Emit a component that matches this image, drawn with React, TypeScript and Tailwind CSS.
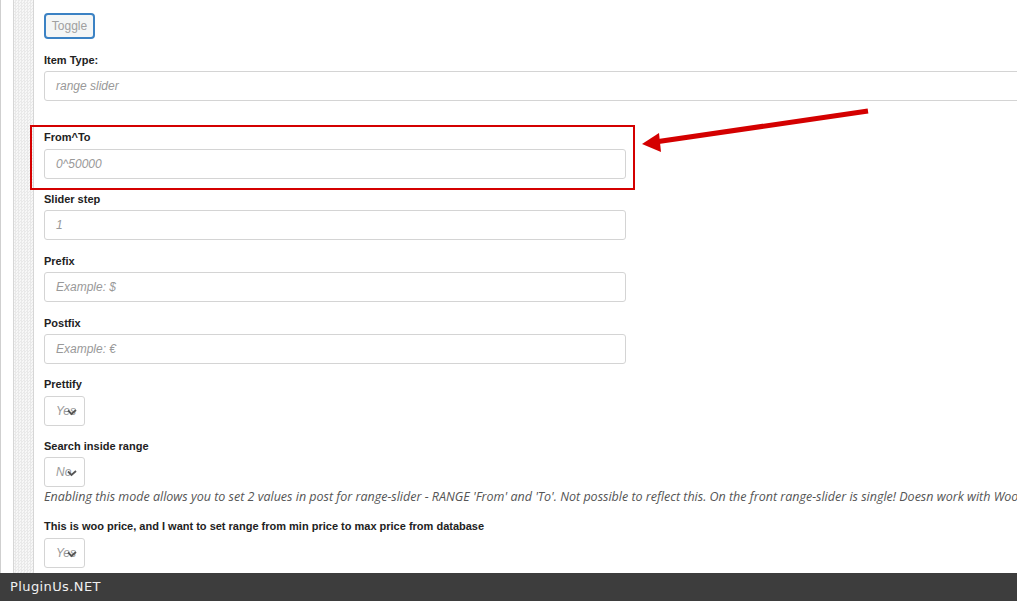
import React from "react";

const labelCls = "text-[11px] leading-[14px] font-bold text-[#222] [font-family:'Liberation_Sans',Arial,sans-serif]";
const inputCls =
  "h-[30px] border border-[#d4d4d4] rounded-[3px] bg-white flex items-center pl-[11px] text-[12px] italic text-[#999] [font-family:'Liberation_Sans',Arial,sans-serif]";

function Chevron() {
  return (
    <svg width="10" height="7" viewBox="0 0 10 7" className="absolute left-[22px] top-[12px]">
      <polyline points="1,1.5 4.5,5 9,1" fill="none" stroke="#555" strokeWidth="1.8" />
    </svg>
  );
}

function Select({ value }: { value: string }) {
  return (
    <div className="relative w-[41px] h-[30px] border border-[#d4d4d4] rounded-[3px] bg-white overflow-hidden">
      <span className="absolute left-[11px] top-[7px] text-[12px] leading-[14px] italic text-[#999] [font-family:'Liberation_Sans',Arial,sans-serif]">
        {value}
      </span>
      <Chevron />
    </div>
  );
}

function Field({ label, placeholder, wide }: { label: string; placeholder: string; wide?: boolean }) {
  return (
    <div className="flex flex-col">
      <div className={labelCls}>{label}</div>
      <div className={`${inputCls} mt-[4px] ${wide ? "w-[1000px] flex-none" : "w-[582px]"}`}>{placeholder}</div>
    </div>
  );
}

export default function App() {
  return (
    <div className="relative w-[1017px] h-[601px] flex flex-col bg-white overflow-hidden">
      <div className="flex flex-1 min-h-0">
        <div className="w-[1px] bg-[#cfcfcf]" />
        <div className="w-[12px] bg-white" />
        <div className="w-[21px] border-l border-r border-[#d6d6d6] bg-[repeating-conic-gradient(#e9e9e9_0%_25%,#f7f7f7_0%_50%)] bg-[length:3px_3px]" />
        <div className="flex-1 min-w-0 pl-[10px] pt-[13px] flex flex-col">
          <div className="w-[51px] h-[26px] border-2 border-[#3b82c4] rounded-[4px] bg-[#f4f6f6] flex items-center justify-center text-[12px] text-[#a0a0a0] [font-family:'Liberation_Sans',Arial,sans-serif]">
            Toggle
          </div>
          <div className="mt-[14px]">
            <Field label="Item Type:" placeholder="range slider" wide />
          </div>
          <div className="relative mt-[29px]">
            <div className="absolute left-[-14px] top-[-5px] w-[605px] h-[65px] border-2 border-[#d40000] pointer-events-none" />
            <div className="flex flex-col">
              <div className={labelCls}>From^To</div>
              <div className={`${inputCls} mt-[5px] w-[582px]`}>0^50000</div>
            </div>
          </div>
          <div className="mt-[13px] flex flex-col gap-[14px]">
            <Field label="Slider step" placeholder="1" />
            <Field label="Prefix" placeholder="Example: $" />
            <Field label="Postfix" placeholder="Example: €" />
          </div>
          <div className="mt-[13px] flex flex-col">
            <div className={labelCls}>Prettify</div>
            <div className="mt-[5px]"><Select value="Yes" /></div>
          </div>
          <div className="mt-[13px] flex flex-col">
            <div className={labelCls}>Search inside range</div>
            <div className="mt-[4px]"><Select value="No" /></div>
          </div>
          <div className="mt-[2px] whitespace-nowrap text-[12.5px] leading-[16px] italic text-[#555] [font-family:'Open_Sans',sans-serif]">
            Enabling this mode allows you to set 2 values in post for range-slider - RANGE 'From' and 'To'. Not possible to reflect this. On the front range-slider is single! Doesn work with Woo
          </div>
          <div className="mt-[14px] flex flex-col">
            <div className={labelCls}>This is woo price, and I want to set range from min price to max price from database</div>
            <div className="mt-[5px]"><Select value="Yes" /></div>
          </div>
        </div>
      </div>
      <div className="h-[28px] flex-none bg-[#3d3d3d] flex items-center pl-[10px] text-[13px] tracking-[0.4px] text-[#f0f0f0] [font-family:'DejaVu_Sans',sans-serif]">
        PluginUs.NET
      </div>
      <svg className="absolute left-0 top-0 pointer-events-none" width="1017" height="601">
        <line x1="868" y1="111" x2="655" y2="142" stroke="#d40000" strokeWidth="5" />
        <polygon points="642,144 659,133 661,152" fill="#d40000" />
      </svg>
    </div>
  );
}
